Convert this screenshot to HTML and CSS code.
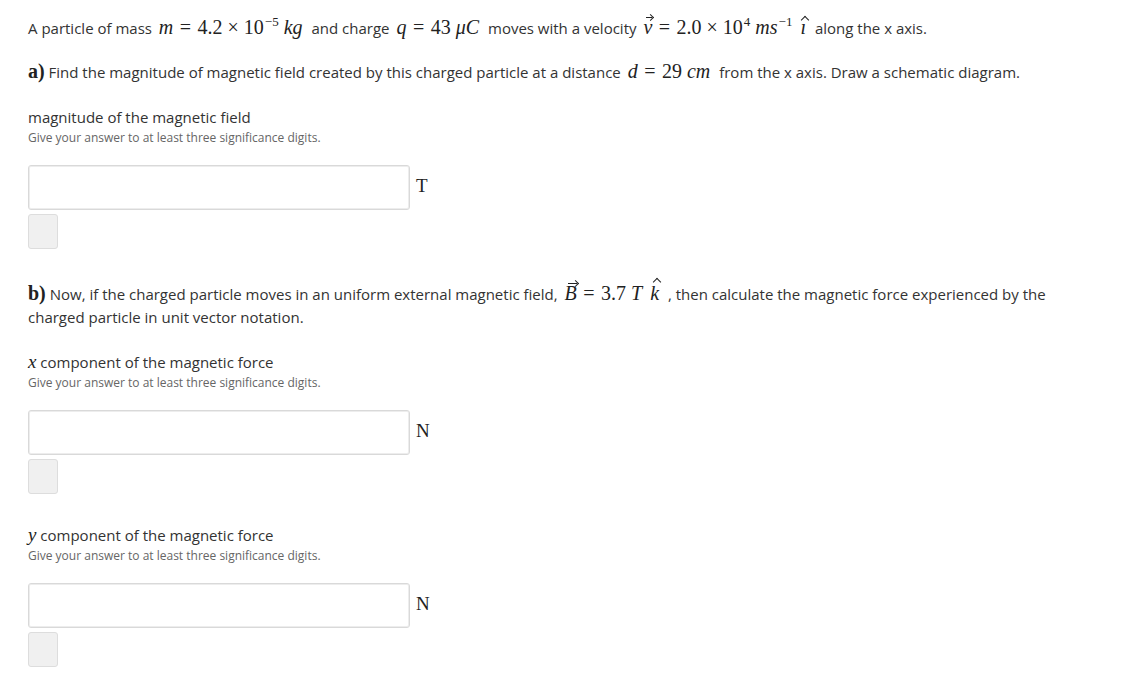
FILE: index.html
```html
<!DOCTYPE html>
<html>
<head>
<meta charset="utf-8">
<link rel="stylesheet" href="styles.css">
</head>
<body>
<div class="page">
  <p class="stem">A particle of mass <span class="m"><i>m</i><span class="rel">=</span>4.2<span class="bin">×</span>10<sup>−5</sup> <i>kg</i></span> and charge <span class="m"><i>q</i><span class="rel">=</span>43 <i>μC</i></span> moves with a velocity <span class="m"><span class="vec"><i>v</i></span><span class="rel">=</span>2.0<span class="bin">×</span>10<sup>4</sup> <i>ms</i><sup>−1</sup> <span class="hat"><i>ı</i></span></span> along the x axis.</p>

  <p class="q"><b class="lbl">a)</b> Find the magnitude of magnetic field created by this charged particle at a distance <span class="m"><i>d</i><span class="rel">=</span>29 <i>cm</i></span> from the x axis. Draw a schematic diagram.</p>

  <div class="field">
    <div class="label">magnitude of the magnetic field</div>
    <div class="hint">Give your answer to at least three significance digits.</div>
    <div class="row"><div class="input"></div><span class="unit">T</span></div>
    <div class="btn"></div>
  </div>

  <p class="q qb"><b class="lbl">b)</b> Now, if the charged particle moves in an uniform external magnetic field, <span class="m"><span class="vec"><i>B</i></span><span class="rel">=</span>3.7 <i>T</i> <span class="hat hat-k"><i>k</i></span></span> , then calculate the magnetic force experienced by the charged particle in unit vector notation.</p>

  <div class="field">
    <div class="label"><i class="mv">x</i> component of the magnetic force</div>
    <div class="hint">Give your answer to at least three significance digits.</div>
    <div class="row"><div class="input"></div><span class="unit">N</span></div>
    <div class="btn"></div>
  </div>

  <div class="field field-next">
    <div class="label"><i class="mv">y</i> component of the magnetic force</div>
    <div class="hint">Give your answer to at least three significance digits.</div>
    <div class="row"><div class="input"></div><span class="unit">N</span></div>
    <div class="btn"></div>
  </div>
</div>
</body>
</html>
```

FILE: styles.css
```css
html, body {
  margin: 0;
  padding: 0;
  background: #ffffff;
}
body {
  font-family: "Open Sans", "Noto Sans", sans-serif;
  font-size: 15px;
  color: #333333;
}
.page {
  padding: 17px 56px 0 28px;
}
p {
  margin: 0;
  line-height: 23px;
}
.stem {
  margin-bottom: 21px;
}
.q {
  margin-bottom: 22px;
}
.qb {
  margin-top: 34px;
}
.m {
  font-family: "Liberation Serif", "DejaVu Serif", serif;
  font-size: 20px;
  color: #222;
  margin: 0 5px 0 3px;
  white-space: nowrap;
  line-height: 1;
}
.m i {
  font-style: italic;
}
.m sup {
  font-size: 13px;
  vertical-align: 8px;
  line-height: 0;
  margin-left: 1px;
}
.rel {
  margin: 0 6.5px;
}
.bin {
  margin: 0 5px;
}
.vec {
  position: relative;
  display: inline-block;
  line-height: 1;
}
.vec::after {
  content: "";
  position: absolute;
  left: 3px;
  right: 0;
  top: 0px;
  height: 0;
  border-top: 1px solid #222;
}
.vec::before {
  content: "";
  position: absolute;
  right: -1px;
  top: -2px;
  width: 4px;
  height: 4px;
  border-top: 1px solid #222;
  border-right: 1px solid #222;
  transform: rotate(45deg);
}
.hat {
  position: relative;
  display: inline-block;
  margin-left: 3px;
  line-height: 1;
}
.hat::after {
  content: "";
  position: absolute;
  left: 2px;
  top: 0px;
  width: 5px;
  height: 5px;
  border-top: 1px solid #222;
  border-left: 1px solid #222;
  transform: rotate(45deg);
}
.hat-k::after {
  left: 4px;
  top: -4px;
}
.lbl {
  font-family: "Liberation Serif", "DejaVu Serif", serif;
  font-size: 20px;
  font-weight: bold;
  color: #222;
  line-height: 1;
}
.label {
  font-size: 15px;
  line-height: 23px;
}
.mv {
  font-family: "Liberation Serif", "DejaVu Serif", serif;
  font-size: 19px;
  color: #222;
  line-height: 1;
}
.hint {
  font-size: 12px;
  line-height: 17px;
  margin-top: 0;
  color: #666666;
}
.row {
  display: flex;
  align-items: center;
  margin-top: 19px;
}
.input {
  width: 380px;
  height: 43px;
  border: 1px solid #d9d9d9;
  box-shadow: inset 0 0 0 1px #ededed;
  border-radius: 3px;
  background: #fff;
}
.unit {
  font-family: "Liberation Serif", "DejaVu Serif", serif;
  font-size: 19px;
  color: #222;
  margin-left: 6px;
  margin-top: -4px;
}
.btn {
  width: 28px;
  height: 33px;
  margin-top: 4px;
  background: #f0f0f0;
  border: 1px solid #dddddd;
  border-radius: 3px;
}
.field-next {
  margin-top: 30px;
}
```
